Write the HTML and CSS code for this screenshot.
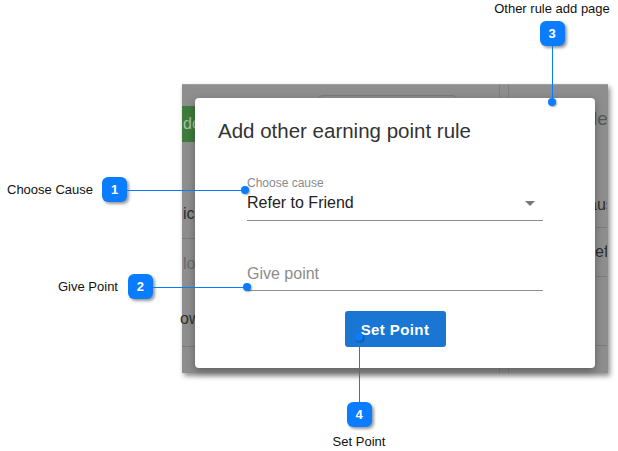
FILE: index.html
```html
<!DOCTYPE html>
<html>
<head>
<meta charset="utf-8">
<link rel="stylesheet" href="styles.css">
</head>
<body>
<div class="canvas">
  <div class="shot">
    <div class="col col-left">
      <div class="top-gap"></div>
      <div class="btn-green"><span>do</span></div>
      <div class="lrow lrow-a"><span>ice</span></div>
      <div class="lrow lrow-b"><span class="faint">lo</span><span class="low">ow</span></div>
    </div>
    <div class="col col-mid">
      <div class="search"></div>
    </div>
    <div class="col col-right">
      <div class="rrow rrow-title"><span>le</span></div>
      <div class="rrow rrow-a"><span>aus</span></div>
      <div class="rrow rrow-b"><span>efe</span></div>
      <div class="rrow rrow-c"></div>
    </div>

    <div class="dialog">
      <h2 class="dlg-title">Add other earning point rule</h2>
      <div class="form">
        <label class="flabel">Choose cause</label>
        <div class="field select">
          <span class="value">Refer to Friend</span>
          <span class="arrow"></span>
        </div>
        <div class="field input">
          <span class="placeholder">Give point</span>
        </div>
        <div class="actions">
          <button class="btn-primary">Set Point</button>
        </div>
      </div>
    </div>
  </div>

  <div class="callout c1"><span class="ctext">Choose Cause</span><span class="badge">1</span></div>
  <div class="callout c2"><span class="ctext">Give Point</span><span class="badge">2</span></div>
  <div class="callout-v c3"><span class="ctext">Other rule add page</span><span class="badge">3</span></div>
  <div class="callout-v c4"><span class="badge">4</span><span class="ctext">Set Point</span></div>

  <div class="line h l1"></div>
  <div class="line h l2"></div>
  <div class="line v l3"></div>
  <div class="line v l4"></div>
  <div class="dot d1"></div>
  <div class="dot d2"></div>
  <div class="dot d3"></div>
  <div class="dot d4"></div>
</div>
</body>
</html>
```

FILE: styles.css
```css
* { box-sizing: border-box; }
html, body { margin: 0; padding: 0; background: #fff; }
body { font-family: "Liberation Sans", Arial, sans-serif; }
.canvas { position: relative; width: 618px; height: 451px; overflow: hidden; }

/* dimmed background screenshot */
.shot {
  position: absolute; left: 182px; top: 84px; width: 426px; height: 289px;
  background: #8e8e8e; display: flex;
  box-shadow: 2px 3px 5px rgba(0,0,0,0.45);
  border-top: 1px solid #a0a0a0;
}
.col { display: flex; flex-direction: column; }
.col-left { width: 150px; }
.top-gap { height: 21px; }
.btn-green {
  height: 36px; width: 60px; background: #3e7c3e; color: #a9c3a9;
  font-size: 16px; line-height: 36px; padding-left: 1px;
}
.lrow { border-bottom: 1px solid #7c7c7c; color: #2e2e2e; font-size: 16px; }
.lrow-a { height: 97px; display: flex; align-items: flex-end; padding-bottom: 15px; padding-left: 1px; }
.lrow-b { height: 108px; display: flex; flex-direction: column; padding-top: 16px; }
.lrow-b .faint { color: #6b6b6b; padding-left: 1px; }
.lrow-b .low { margin-top: 37px; margin-left: -2px; }
.col-mid { width: 168px; border-right: 1px solid #7e7e7e; padding: 10px 0 0 0; }
.search { margin-left: -15px; width: 141px; height: 30px; border: 1px solid #7b7b7b; border-radius: 6px; }
.col-right { width: 99px; margin-left: 8px; border-left: 1px solid #7e7e7e; color: #2e2e2e; font-size: 16px; white-space: nowrap; overflow: hidden; }
.rrow { border-bottom: 1px solid #7c7c7c; display: flex; align-items: center; }
.rrow-title { height: 96px; border-bottom: none; align-items: flex-start; padding-top: 23px; padding-left: 84px; font-size: 19px; color: #575757; }
.rrow-a { height: 47px; padding-top: 2px; padding-left: 79px; }
.rrow-b { height: 49px; padding-left: 86px; }
.rrow-c { height: 69px; }

/* dialog */
.dialog {
  position: absolute; left: 13px; top: 13px; width: 400px; height: 270px;
  background: #fff; border-radius: 4px;
  box-shadow: 0 3px 8px rgba(0,0,0,0.35);
  padding: 21px 0 0 0;
}
.dlg-title {
  margin: 0; padding-left: 23px; font-weight: normal; font-size: 20.5px; line-height: 24px; color: #333;
}
.form { padding: 0 52px; display: flex; flex-direction: column; }
.flabel { margin-top: 33px; font-size: 12px; line-height: 14px; color: #8a8a8a; }
.field { display: flex; align-items: center; justify-content: space-between; border-bottom: 1px solid #8d8d8d; padding-bottom: 6px; font-size: 16px; line-height: 20px; }
.select { margin-top: 3px; padding-bottom: 7px; }
.value { color: #222; }
.arrow { width: 0; height: 0; border-left: 5px solid transparent; border-right: 5px solid transparent; border-top: 5px solid #777; margin-right: 8px; margin-top: 1px; }
.input { margin-top: 43px; }
.placeholder { color: #8c8c8c; }
.actions { display: flex; justify-content: center; margin-top: 20px; }
.btn-primary {
  width: 101px; height: 36px; border: none; border-radius: 3px; background: #1976d2; color: #fff;
  font-family: "Liberation Sans", Arial, sans-serif; font-weight: bold; font-size: 15px; letter-spacing: 0.4px; padding: 0;
}

/* callouts */
.callout { position: absolute; display: flex; align-items: center; }
.callout-v { position: absolute; display: flex; flex-direction: column; align-items: center; }
.ctext { font-size: 13px; color: #111; white-space: nowrap; }
.badge {
  width: 25px; height: 25px; border-radius: 6px; background: #0a7cff; color: #fff;
  font-weight: bold; font-size: 13px; display: flex; align-items: center; justify-content: center;
  box-shadow: 2px 2px 3px rgba(0,0,0,0.4);
}
.c1 { left: 7px; top: 177px; gap: 9px; }
.c2 { left: 58px; top: 274px; gap: 10px; }
.c3 { left: 492px; top: 1px; width: 120px; gap: 5px; }
.c4 { left: 299px; top: 402px; width: 120px; gap: 7px; }

.line { position: absolute; background: #0a7cff; }
.h { height: 1px; }
.v { width: 1px; }
.l1 { left: 127px; top: 190px; width: 118px; }
.l2 { left: 153px; top: 287px; width: 94px; }
.l3 { left: 552px; top: 46px; height: 56px; }
.l4 { left: 359px; top: 337px; height: 65px; }
.dot { position: absolute; width: 8px; height: 8px; border-radius: 50%; background: #0a7cff; box-shadow: 1px 1px 2px rgba(0,0,0,0.35); }
.d1 { left: 241px; top: 186px; }
.d2 { left: 243px; top: 283px; }
.d3 { left: 548px; top: 98px; }
.d4 { left: 355px; top: 333px; }
```
